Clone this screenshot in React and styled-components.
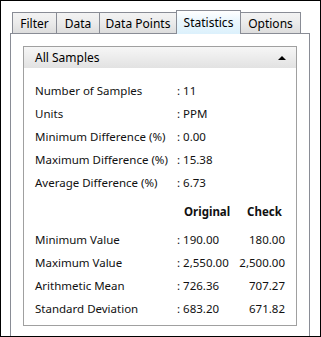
import React from "react";
import styled, { createGlobalStyle } from "styled-components";

const GlobalStyle = createGlobalStyle`
  html, body {
    margin: 0;
    padding: 0;
    background: #fff;
  }
  body {
    font-family: "Noto Sans", "Open Sans", sans-serif;
    font-size: 11.5px;
  }
`;

const Frame = styled.div`
  box-sizing: border-box;
  width: 321px;
  height: 337px;
  border: 1px solid #000;
  background: #fff;
  padding: 10px 10px 0 9px;
  display: flex;
  flex-direction: column;
`;

const TabStrip = styled.div`
  display: flex;
  align-items: flex-end;
  height: 23px;
  padding-left: 2px;
  position: relative;
  z-index: 1;
  margin-bottom: -1px;
`;

const Tab = styled.div`
  box-sizing: border-box;
  width: ${(p) => p.w}px;
  height: ${(p) => (p.active ? 24 : 22)}px;
  margin-left: -1px;
  &:first-child {
    margin-left: 0;
  }
  border: 1px solid #898c95;
  border-bottom: ${(p) => (p.active ? "none" : "1px solid #898c95")};
  background: ${(p) =>
    p.active
      ? "linear-gradient(#ffffff, #ecf7fd 40%, #dcf1fc)"
      : "linear-gradient(#f3f3f3, #ebebeb 50%, #dddddd)"};
  color: #000;
  font-size: 12px;
  display: flex;
  align-items: center;
  justify-content: center;
  padding-top: 1px;
  padding-bottom: ${(p) => (p.active ? 1 : 0)}px;
  position: relative;
  z-index: ${(p) => (p.active ? 2 : 1)};
`;

const Panel = styled.div`
  flex: 1;
  box-sizing: border-box;
  border: 1px solid #898c95;
  border-bottom: none;
  background: #fff;
  padding: 12px 12px 10px 12px;
  display: flex;
  flex-direction: column;
`;

const Group = styled.div`
  flex: 1;
  border: 1px solid #a0a0a0;
  display: flex;
  flex-direction: column;
`;

const GroupHeader = styled.div`
  height: 21px;
  background: linear-gradient(#f6f6f6, #ececec 50%, #e2e2e2);
  display: flex;
  align-items: center;
  justify-content: space-between;
  padding: 0 10px 0 11px;
  color: #000;
  font-size: 12px;
`;

const Caret = styled.span`
  width: 0;
  height: 0;
  border-left: 4px solid transparent;
  border-right: 4px solid transparent;
  border-bottom: 4px solid #000;
`;

const Grid = styled.div`
  display: grid;
  grid-template-columns: 142px 63px 45px;
  grid-template-rows: repeat(5, 23px) 34px repeat(4, 23px);
  padding: 11px 0 0 11px;
  color: #111;
`;

const Cell = styled.div`
  display: flex;
  align-items: center;
  white-space: nowrap;
  justify-content: ${(p) =>
    p.align === "right" ? "flex-end" : p.align === "center" ? "center" : "flex-start"};
  font-weight: ${(p) => (p.bold ? 700 : 400)};
  padding-left: ${(p) => p.pl || 0}px;
`;

const info = [
  ["Number of Samples", ": 11"],
  ["Units", ": PPM"],
  ["Minimum Difference (%)", ": 0.00"],
  ["Maximum Difference (%)", ": 15.38"],
  ["Average Difference (%)", ": 6.73"],
];

const values = [
  ["Minimum Value", ": 190.00", "180.00"],
  ["Maximum Value", ": 2,550.00", "2,500.00"],
  ["Arithmetic Mean", ": 726.36", "707.27"],
  ["Standard Deviation", ": 683.20", "671.82"],
];

const tabs = [
  ["Filter", 45],
  ["Data", 44],
  ["Data Points", 78],
  ["Statistics", 65],
  ["Options", 61],
];

export default function App() {
  return (
    <>
      <GlobalStyle />
      <Frame>
        <TabStrip>
          {tabs.map(([t, w]) => (
            <Tab key={t} w={w} active={t === "Statistics"}>
              {t}
            </Tab>
          ))}
        </TabStrip>
        <Panel>
          <Group>
            <GroupHeader>
              <span>All Samples</span>
              <Caret />
            </GroupHeader>
            <Grid>
              {info.map(([l, v]) => (
                <React.Fragment key={l}>
                  <Cell>{l}</Cell>
                  <Cell>{v}</Cell>
                  <Cell />
                </React.Fragment>
              ))}
              <Cell />
              <Cell bold pl={7}>Original</Cell>
              <Cell bold align="center" pl={4}>Check</Cell>
              {values.map(([l, a, b]) => (
                <React.Fragment key={l}>
                  <Cell>{l}</Cell>
                  <Cell>{a}</Cell>
                  <Cell align="right">{b}</Cell>
                </React.Fragment>
              ))}
            </Grid>
          </Group>
        </Panel>
      </Frame>
    </>
  );
}
